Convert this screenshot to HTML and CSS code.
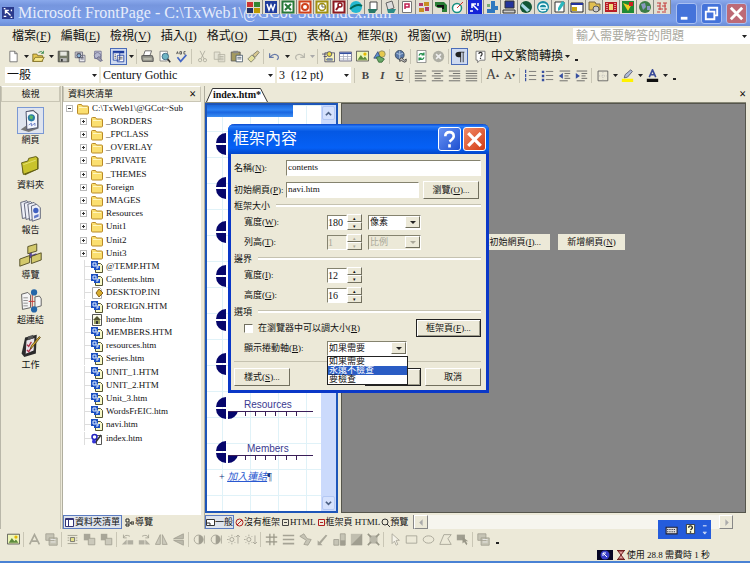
FILE: index.html
```
<!DOCTYPE html>
<html lang="zh-Hant">
<head>
    <meta charset="UTF-8">
    <meta name="viewport" content="width=device-width, initial-scale=1.0">
    <title>Microsoft FrontPage</title>
    <link rel="stylesheet" href="styles.css">
</head>
<body>
    <svg class="sprite" aria-hidden="true">
        <!-- standard toolbar -->
        <symbol id="new" viewBox="0 0 16 16"><path d="M3.5 1.5h6l3 3v10h-9z" fill="#fff" stroke="#666"/><path d="M9.500 1.500v3h3" fill="none" stroke="#666"/></symbol>
        <symbol id="open" viewBox="0 0 16 16"><path d="M1 5h5l1 2h6v7H1z" fill="#e8c850" stroke="#776820"/><path d="M4 9h11l-3 5H1z" fill="#f7e88a" stroke="#776820"/><path d="M8 3q4-3 6 1m0-3v3h-3" fill="none" stroke="#268040"/></symbol>
        <symbol id="save" viewBox="0 0 16 16"><path d="M1.500 1.500h13v13h-13z" fill="#777b68" stroke="#444"/><path d="M4 2h8v5H4z" fill="#e7e7e0"/><path d="M4 10h8v4H4z" fill="#bbb"/><path d="M5 11h2v3H5z" fill="#333"/></symbol>
        <symbol id="find" viewBox="0 0 16 16"><path d="M1.500 2.500h9v7h-9zM6.500 6.500h7v8h-7z" fill="#e9e9ef" stroke="#667"/><path d="M3 4h6M3 6h4M8 9h4M8 11h4" stroke="#556" /><circle cx="6" cy="7" r="2.500" fill="#8fb6d8" stroke="#334"/></symbol>
        <symbol id="publish" viewBox="0 0 16 16"><path d="M4.500 1.500h8v9h-8z" fill="#dde" stroke="#668"/><circle cx="8" cy="7" r="4" fill="#b5b8cf" stroke="#668"/><path d="M10 8l4 5-3 1-4-4z" fill="#99a" stroke="#668"/></symbol>
        <symbol id="pane" viewBox="0 0 16 16"><path d="M1 1h14v3H1z" fill="#1a3a9c"/><path d="M1.500 3.500h8v9h-8zM6.500 6.500h8v8h-8z" fill="#fff" stroke="#1a3a9c"/><path d="M3 6h2M3 8h2M3 10h2M8 9h5M8 11h5" stroke="#555"/></symbol>
        <symbol id="print" viewBox="0 0 16 16"><path d="M5 1h8l-2 6H3z" fill="#fff" stroke="#555"/><path d="M1 7h13l1 3v4H2l-1-3z" fill="#999a90" stroke="#444"/><path d="M3 11h10" stroke="#e2e2d2"/></symbol>
        <symbol id="preview" viewBox="0 0 16 16"><path d="M2.500 1.500h9v12h-9z" fill="#fff" stroke="#777"/><circle cx="9" cy="8" r="4" fill="#6eb4c4" stroke="#355c77"/><path d="M12 11l3 4" stroke="#333" stroke-width="2"/></symbol>
        <symbol id="spell" viewBox="0 0 16 16"><path d="M2 5l1-3 1 3M6 2v3h2V2zM13 2h-2v3h2" fill="none" stroke="#444"/><path d="M3 9l4 5 7-8" fill="none" stroke="#4466c4" stroke-width="2"/></symbol>
        <symbol id="cut" viewBox="0 0 16 16"><path d="M5 1l5 10M11 1L6 11" fill="none" stroke="#aaa99a"/><circle cx="5" cy="12.500" r="2" fill="none" stroke="#aaa99a"/><circle cx="11" cy="12.500" r="2" fill="none" stroke="#aaa99a"/></symbol>
        <symbol id="copy" viewBox="0 0 16 16"><path d="M1.500 2.500h7v9h-7zM6.500 5.500h8v9h-8z" fill="#e5e3d5" stroke="#b4b2a2"/><path d="M8 8h5M8 10h5M8 12h5" stroke="#b4b2a2"/></symbol>
        <symbol id="paste" viewBox="0 0 16 16"><path d="M1.500 2.500h11v11h-11z" fill="#a49a60" stroke="#555"/><path d="M4 1h6v3H4z" fill="#888"/><path d="M7.500 6.500h8v8h-8z" fill="#fff" stroke="#456"/><path d="M9 9h5M9 11h5" stroke="#456"/></symbol>
        <symbol id="brush" viewBox="0 0 16 16"><path d="M13 1l2 2-5 6-3-3z" fill="#d8c890" stroke="#776"/><path d="M6 6l4 4-5 5-4-4z" fill="#e4e19c" stroke="#776"/></symbol>
        <symbol id="undo" viewBox="0 0 16 16"><path d="M2 4v5h5M2 9q6-6 10-2 2 3-1 5" fill="none" stroke="#6578a8" stroke-width="1.500"/></symbol>
        <symbol id="redo" viewBox="0 0 16 16"><path d="M14 4v5H9M14 9Q8 3 4 7q-2 3 1 5" fill="none" stroke="#b9b8ad" stroke-width="1.500"/></symbol>
        <symbol id="component" viewBox="0 0 16 16"><path d="M3.500 3.500h12v11h-12z" fill="#f5f0b8" stroke="#446"/><path d="M0 5h5M2 8h4M5 12h8" stroke="#446"/><circle cx="9" cy="5" r="3" fill="#e8d940" stroke="#446"/><path d="M6 10h7v3H6z" fill="#78a"/></symbol>
        <symbol id="table" viewBox="0 0 16 16"><path d="M.5 2.500h15v11H.5z" fill="#fff" stroke="#557"/><path d="M1 3h14v2H1z" fill="#3450a0"/><path d="M1 8h14M1 11h14M5.500 5v8M10.500 5v8" stroke="#a9aebf"/></symbol>
        <symbol id="picture" viewBox="0 0 16 16"><path d="M.5 1.500h15v12H.5z" fill="#eef6b8" stroke="#444"/><path d="M2 12l4-6 3 4 2-2 3 4z" fill="#5c8a3c"/><circle cx="11" cy="5" r="2" fill="#e6b800"/></symbol>
        <symbol id="shapes" viewBox="0 0 16 16"><circle cx="11" cy="5" r="4" fill="#e6c94c" stroke="#886"/><path d="M1 10l5-8 3 8z" fill="#5b8fd0" stroke="#347"/><path d="M4 9l4-1 6 3-3 4H7z" fill="#68a867" stroke="#363"/></symbol>
        <symbol id="link" viewBox="0 0 16 16"><circle cx="7" cy="6" r="5.500" fill="#5978a8" stroke="#345"/><path d="M3 4q4 3 8 0M7 1v10" stroke="#bcd0e4" fill="none"/><path d="M7 11q2-3 4 0t4 0v3q-2 2-4 0t-4 0z" fill="#bbb" stroke="#333"/></symbol>
        <symbol id="refresh" viewBox="0 0 16 16"><path d="M2.500.5h11v15h-11z" fill="#fff" stroke="#777"/><path d="M5 7q1-4 6-2m0-2v3H8M11 9q-1 4-6 2m0 2v-3h3" fill="none" stroke="#289050" stroke-width="1.500"/></symbol>
        <symbol id="stop" viewBox="0 0 16 16"><circle cx="8" cy="8" r="7" fill="#aeaea4"/><path d="M5 5l6 6M11 5l-6 6" stroke="#eee" stroke-width="2"/></symbol>
        <symbol id="para" viewBox="0 0 16 16"><path d="M8 2h6v1h-1v12h-1V3h-2v12H9V9Q3 9 3 5.500T8 2z" fill="#222"/></symbol>
        <symbol id="help" viewBox="0 0 16 16"><path d="M2.500 1.500h11v11h-6l-3 3v-3h-2z" fill="#fff" stroke="#666"/><path d="M6 5q0-2 2-2t2 2q0 1-2 3m0 1.500v1.500" fill="none" stroke="#333" stroke-width="1.500"/></symbol>
        <!-- formatting toolbar -->
        <symbol id="left" viewBox="0 0 16 16"><path d="M1 2.500h14M1 5.500h9M1 8.500h14M1 11.500h9M1 14.500h14" stroke="#555"/></symbol>
        <symbol id="center" viewBox="0 0 16 16"><path d="M1 2.500h14M4 5.500h8M1 8.500h14M4 11.500h8M1 14.500h14" stroke="#555"/></symbol>
        <symbol id="right" viewBox="0 0 16 16"><path d="M1 2.500h14M6 5.500h9M1 8.500h14M6 11.500h9M1 14.500h14" stroke="#555"/></symbol>
        <symbol id="justify" viewBox="0 0 16 16"><path d="M1 2.500h14M1 5.500h14M1 8.500h14M1 11.500h14M1 14.500h14" stroke="#555"/></symbol>
        <symbol id="numbers" viewBox="0 0 16 16"><path d="M2 1v4M2 6v4M2 11v4" stroke="#3850a0" stroke-width="1.500"/><path d="M6 3h9M6 8h9M6 13h9" stroke="#666"/></symbol>
        <symbol id="bullets" viewBox="0 0 16 16"><path d="M1 2h3v3H1zM1 7h3v3H1zM1 12h3v3H1z" fill="#3850a0"/><path d="M6 3h9M6 8h9M6 13h9" stroke="#666"/></symbol>
        <symbol id="outdent" viewBox="0 0 16 16"><path d="M2 2.500h13M8 5.500h7M8 8.500h5M8 11.500h7M2 14.500h10" stroke="#555"/><path d="M6 5v7L1 8.500z" fill="#3850a0"/></symbol>
        <symbol id="indent" viewBox="0 0 16 16"><path d="M2 2.500h13M8 5.500h7M8 8.500h5M8 11.500h7M2 14.500h10" stroke="#555"/><path d="M1 5v7l5-3.500z" fill="#3850a0"/></symbol>
        <symbol id="border" viewBox="0 0 16 16"><path d="M2.500 2.500h12v12h-12z" fill="none" stroke="#555"/><path d="M8.500 4v10M4 8.500h10" stroke="#aaa" stroke-dasharray="1 2"/></symbol>
        <symbol id="marker" viewBox="0 0 16 16"><path d="M12 1l2 2-6 7-4 1 1-4z" fill="#b0bdd8" stroke="#556"/><path d="M1 12h14v4H1z" fill="#fff200"/></symbol>
        <symbol id="fontcolor" viewBox="0 0 16 16"><path d="M4 10l4-9 4 9M5.500 7h5" fill="none" stroke="#3a4b98" stroke-width="2"/><path d="M1 12h14v4H1z" fill="#111"/></symbol>
        <!-- folder list -->
        <symbol id="folder" viewBox="0 0 12 11"><path d="M.5 2q0-1 1-1h3l1 1.500h5q1 0 1 1v6q0 1-1 1h-9q-1 0-1-1z" fill="#fbdf70" stroke="#b98a28"/><path d="M2 4h8" stroke="#fff6c0"/></symbol>
        <symbol id="page" viewBox="0 0 12 12"><path d="M6.500 2.500h3l2 2v7h-7v-3z" fill="#f8f8c8" stroke="#555533"/><path d="M0 0h7v5h2v4H3V7H0z" fill="#1a4fc0"/><path d="M2 2h3v3H2zM5 5h2v2H5" fill="none" stroke="#dceaff"/></symbol>
        <symbol id="ini" viewBox="0 0 12 12"><path d="M1.500.5h7l2 2v9h-9z" fill="#fff" stroke="#aaa"/><path d="M8 2l4 4-4 4-3-4z" fill="#d8ae30" stroke="#86601a"/></symbol>
        <symbol id="home" viewBox="0 0 12 12"><path d="M1.500.5h9v11h-9z" fill="#fdfdea" stroke="#555"/><path d="M6 2l4 4H2z" fill="#555533"/><path d="M3 6h6v4H3z" fill="#99a060"/><path d="M5 7h2v3H5z" fill="#333"/></symbol>
        <symbol id="editing" viewBox="0 0 12 12"><path d="M5.500 2.500h5v9h-5z" fill="#fff" stroke="#555"/><circle cx="3.500" cy="4" r="2.500" fill="#fff" stroke="#2020c0" stroke-width="1.500"/><path d="M4 10l6-8" stroke="#333" stroke-width="1.500"/><circle cx="3" cy="8.500" r="2" fill="#3535d8"/></symbol>
        <!-- views bar -->
        <symbol id="v-page" viewBox="0 0 28 28"><path d="M3 24l6-4V4l8-2 6 5v16l-11 4z" fill="#777"/><path d="M9 4l8-1 5 4v15l-12 2z" fill="#f4f6fc" stroke="#444a66"/><circle cx="15" cy="11" r="4" fill="#2979a5"/><path d="M13 8l4 1-1 4-3-1z" fill="#58b868"/><path d="M12 19l3-2v3l4-3v3" stroke="#6478c4" fill="none"/></symbol>
        <symbol id="v-folder" viewBox="0 0 28 28"><path d="M5 12l7-2 1-3 8-3 2 2v12L8 25l-3-3z" fill="#686510"/><path d="M4 11l7-2 1-3 8-2 2 2v12L6 24z" fill="#c9c32c" stroke="#5a5714"/><path d="M6 13l14-5" stroke="#e8e478"/></symbol>
        <symbol id="v-report" viewBox="0 0 28 28"><g fill="#eef0f8" stroke="#555b70"><path d="M3 5l7-2 3 3v15l-8 2z"/><path d="M7 6l7-2 3 3v15l-8 2z"/><path d="M11 7l7-2 3 3v15l-8 2z"/><path d="M15 9l6-2 4 4v12l-9 3z"/></g><circle cx="20" cy="14" r="3" fill="#4060c0"/><path d="M18 20l5-2v3l-5 2z" fill="#6078c8"/></symbol>
        <symbol id="v-nav" viewBox="0 0 28 28"><path d="M14 8v8M7 18l14-5" stroke="#5b49a0" fill="none" stroke-width="3"/><g fill="#d3c96c" stroke="#4e4820"><path d="M11 4l10-3v8l-10 3z"/><path d="M2 18l11-4v8L2 26z"/><path d="M15 15l11-4v8l-11 4z"/></g></symbol>
        <symbol id="v-link" viewBox="0 0 28 28"><path d="M4 7l7-2 3 3v14l-9 2zM19 10l5-1 2 3v8l-7 2z" fill="#f4f4f4" stroke="#555"/><path d="M6 11h5M6 14h5M6 17h5M6 20h5" stroke="#888"/><path d="M12 15h7M16 6v19" stroke="#c03030"/><circle cx="18" cy="5" r="3.500" fill="#2466a8"/><circle cx="18" cy="24" r="3.500" fill="#2466a8"/></symbol>
        <symbol id="v-task" viewBox="0 0 28 28"><path d="M4 23l4-18 13-3-1 21-13 4z" fill="#2b2b2b"/><path d="M9 8l10-3-1 15-10 4z" fill="#e9e4e9" stroke="#222"/><path d="M11 4l6-2v4l-6 2z" fill="#555"/><path d="M10 13l2 2 3-5M10 19l2 2 3-5" stroke="#b03048" fill="none" stroke-width="1.500"/><path d="M25 5L16 16l-2 2 1-4 9-10z" fill="#e3b838" stroke="#5a4414"/></symbol>
        <!-- pictures toolbar -->
        <symbol id="d-text" viewBox="0 0 16 16"><path d="M2 14L8 2l6 12M5 10h7" fill="none" stroke="#aaa89a" stroke-width="2"/></symbol>
        <symbol id="d-thumb" viewBox="0 0 16 16"><path d="M1 1h10v8H1zM5 6h10v9H5z" fill="#c6c4b5" stroke="#a09e90"/><path d="M7 8h6M7 11h6" stroke="#eee"/></symbol>
        <symbol id="d-pos" viewBox="0 0 16 16"><path d="M2 3h12M2 6h2M12 6h2M2 9h2M12 9h2M2 13h12" stroke="#999788"/><path d="M5.500 5.500h5v5h-5z" fill="#e5e188" stroke="#666"/></symbol>
        <symbol id="d-front" viewBox="0 0 16 16"><path d="M1 1h8v8H1z" fill="#a8a698"/><path d="M6.500 6.500h8v8h-8z" fill="#cbc9bb" stroke="#a09e90"/></symbol>
        <symbol id="d-rotl" viewBox="0 0 16 16"><path d="M1 14l6-6v6zM8 14V9h7v5z" fill="#b1afa2"/><path d="M3 6q2-5 8-2M3 2v4h4" fill="none" stroke="#a09e90"/></symbol>
        <symbol id="d-rotr" viewBox="0 0 16 16"><path d="M15 14L9 8v6zM8 14V9H1v5z" fill="#b1afa2"/><path d="M13 6q-2-5-8-2M13 2v4H9" fill="none" stroke="#a09e90"/></symbol>
        <symbol id="d-fliph" viewBox="0 0 16 16"><path d="M6.500 2v12h-6zM9 2v12h6z" fill="#cbc9bb" stroke="#a09e90"/></symbol>
        <symbol id="d-flipv" viewBox="0 0 16 16"><path d="M14 1v6H2zM14 15V9H2z" fill="#bbb9ab" stroke="#a09e90"/></symbol>
        <symbol id="d-contrast" viewBox="0 0 16 16"><circle cx="7" cy="8" r="5.500" fill="none" stroke="#a09e90"/><path d="M7 2.500a5.500 5.500 0 0 1 0 11z" fill="#a09e90"/><path d="M14 3v10" stroke="#a09e90"/></symbol>
        <symbol id="d-bright" viewBox="0 0 16 16"><circle cx="6" cy="8" r="2.500" fill="none" stroke="#a09e90"/><path d="M6 2v2M6 12v2M0 8h2M2 4l1 1M10 4L9 5M2 12l1-1M10 12l-1-1M13.500 3v10M11 5l2.500-2.500L16 5" fill="none" stroke="#a09e90"/></symbol>
        <symbol id="d-dim" viewBox="0 0 16 16"><circle cx="6" cy="8" r="2.500" fill="none" stroke="#a09e90"/><path d="M6 2v2M6 12v2M0 8h2M2 4l1 1M10 4L9 5M2 12l1-1M10 12l-1-1M13.500 3v10M11 11l2.500 2.500L16 11" fill="none" stroke="#a09e90"/></symbol>
        <symbol id="d-crop" viewBox="0 0 16 16"><path d="M6 1v14M11 1v14M1 5h14M1 11h14" fill="none" stroke="#999788" stroke-width="1.500"/></symbol>
        <symbol id="d-line" viewBox="0 0 16 16"><path d="M1 3h14M1 8h14M1 13h14" stroke="#a5a395" stroke-width="2"/></symbol>
        <symbol id="d-wand" viewBox="0 0 16 16"><path d="M1 4l5-3 4 6 5 1-4 7-5-1 3-5z" fill="#c6c4b5" stroke="#a09e90"/></symbol>
        <symbol id="d-pen" viewBox="0 0 16 16"><path d="M2 9v6h6l-2-2 8-10-2-1-8 9z" fill="#aaa89a"/></symbol>
        <symbol id="d-bars" viewBox="0 0 16 16"><path d="M1 8h6v7H1zM9 1h6v14H9z" fill="#c6c4b5" stroke="#a09e90"/><path d="M9 9h6v6H9z" fill="#a09e90"/></symbol>
        <symbol id="d-bevel" viewBox="0 0 16 16"><path d="M1 1h14v14H1z" fill="#c0beaf"/><path d="M15 1v14H1z" fill="#a09e90"/></symbol>
        <symbol id="d-sample" viewBox="0 0 16 16"><path d="M3 3h10v10H3z" fill="#b9b7a9"/><path d="M1 1l4 4M15 1l-4 4M1 15l4-4M15 15l-4-4" stroke="#999788" stroke-width="2"/></symbol>
        <symbol id="d-arrow" viewBox="0 0 16 16"><path d="M5 1v12l3-3 2 5 2-1-2-5h4z" fill="#f5f3e9" stroke="#a5a395"/></symbol>
        <symbol id="d-rect" viewBox="0 0 16 16"><path d="M1.500 3.500h13v9h-13z" fill="none" stroke="#a09e90"/></symbol>
        <symbol id="d-oval" viewBox="0 0 16 16"><ellipse cx="8" cy="8" rx="6.500" ry="4.500" fill="none" stroke="#a09e90"/></symbol>
        <symbol id="d-poly" viewBox="0 0 16 16"><path d="M6 2h9l-4 5 4 7H1z" fill="none" stroke="#a09e90"/></symbol>
        <symbol id="d-hot" viewBox="0 0 16 16"><path d="M1 2h10v7H1z" fill="#a09e90"/><path d="M8 5v8l2-2 3 4 1-2-2-3h3z" fill="#999788"/></symbol>
        <!-- small parts -->
        <symbol id="bullet" viewBox="0 0 98 24"><path d="M10 0v10H0A10 10 0 0 1 10 0zM0 12h10v10A10 10 0 0 1 0 12zM12 14h10a10 10 0 0 1-10 8z" fill="#06066c"/><path d="M12 14.500h85M29.500 15v4M39.500 15v4M49.500 15v4M59.500 15v4M70.500 15v4M80.500 15v4" stroke="#3a1e58"/></symbol>
        <symbol id="frontpage" viewBox="0 0 14 14"><path d="M0 0h14v14H0z" fill="#2a3a8c"/><path d="M4 4l6 6M4 8V4h4M2 2h2M10 12h2M11 3v2M2 11h3" fill="none" stroke="#fff" stroke-width="1.500"/></symbol>
    </svg>

    <header class="title-bar">
        <svg class="app-icon"><use href="#frontpage"/></svg>
        <h1>Microsoft FrontPage - C:\TxWeb1\@GCot-Sub\index.htm</h1>
        <div class="window-buttons">
            <button aria-label="Minimize"><svg viewBox="0 0 20 20"><path d="M4 15h7" stroke="#fff" stroke-width="3"/></svg></button>
            <button aria-label="Restore"><svg viewBox="0 0 20 20"><path d="M7 7V4h9v8h-3M4 8h9v8H4z" fill="none" stroke="#fff" stroke-width="2"/></svg></button>
            <button class="close" aria-label="Close"><svg viewBox="0 0 20 20"><path d="M4 4l12 12M16 4L4 16" stroke="#fff" stroke-width="3"/></svg></button>
        </div>
        <!-- office shortcut bar floats over the title -->
        <div class="shortcut-bar">
            <svg viewBox="0 0 16 14"><path d="M1 2h6v5H1z" fill="#c33"/><path d="M8 2h6v5H8z" fill="#383"/><path d="M1 8h6v5H1z" fill="#236"/><path d="M8 8h6v5H8z" fill="#b90"/></svg>
            <svg viewBox="0 0 16 14"><path d="M2 1h12v12H2z" fill="#203c9c"/><path d="M4 4l2 6 2-5 2 5 2-6" fill="none" stroke="#fff" stroke-width="1.500"/></svg>
            <svg viewBox="0 0 16 14"><path d="M2.500 1.500h11v11h-11z" fill="#fff" stroke="#287838" stroke-width="2"/><path d="M5 4l6 6M11 4l-6 6" stroke="#287838" stroke-width="2"/></svg>
            <svg viewBox="0 0 16 14"><path d="M2.500 1.500h11v11h-11z" fill="#fff" stroke="#cf421c" stroke-width="2"/><circle cx="8" cy="7" r="3" fill="none" stroke="#cf421c" stroke-width="2"/></svg>
            <svg viewBox="0 0 16 14"><path d="M2.500 1.500h11v11h-11z" fill="#fff" stroke="#a09010" stroke-width="2"/><circle cx="8" cy="7" r="3.500" fill="none" stroke="#a09010" stroke-width="1.500"/><path d="M8 4v3h3" fill="none" stroke="#665"/></svg>
            <svg viewBox="0 0 16 14"><path d="M2.500 1.500h11v11h-11z" fill="#fff" stroke="#8c1820" stroke-width="2"/><path d="M5 10l3-4" stroke="#8c1820" stroke-width="2"/><circle cx="9" cy="5" r="2" fill="#fff" stroke="#8c1820" stroke-width="1.500"/></svg>
            <svg viewBox="0 0 16 14"><circle cx="8" cy="7" r="6" fill="#25b8d0"/><path d="M2 9q7-6 12-3" fill="none" stroke="#065" stroke-width="2"/></svg>
            <svg viewBox="0 0 16 14"><path d="M5 2h7v8H5z" fill="#fff" stroke="#444"/><path d="M3 9h9l-2 4H4z" fill="#287868"/></svg>
            <svg viewBox="0 0 16 14"><path d="M4 3l6-2 2 7-6 2z" fill="#ddd" stroke="#666"/><path d="M5 9h9l-2 4H6z" fill="#2c8c88"/></svg>
            <svg viewBox="0 0 16 14"><path d="M3.500 1.500h9v11h-9z" fill="#fff" stroke="#777"/><path d="M6 9V4h4v3H6" fill="none" stroke="#c02050" stroke-width="1.500"/></svg>
            <svg viewBox="0 0 16 14"><path d="M2 3h12v9H2z" fill="#ddd"/><path d="M3 3h4v3H3zM9 7h4v4H9z" fill="#b23a66"/><path d="M8 2h5v4H8zM3 8h5v4H3z" fill="#c88f22"/></svg>
            <svg viewBox="0 0 16 14"><path d="M2 2h9l3 3v7H9V8H5L2 6z" fill="#2a7d36"/><path d="M4 6h6v3" fill="none" stroke="#111" stroke-width="2"/></svg>
            <svg viewBox="0 0 16 14"><circle cx="7" cy="8" r="4.500" fill="#fff" stroke="#199080" stroke-width="1.500"/><path d="M7 8l6-6" stroke="#c33"/></svg>
            <svg viewBox="0 0 16 14"><path d="M1 0h14v14H1z" fill="#1424d8"/><path d="M5 4l6 6M5 8V4h4M3 11h3M11 3v3" fill="none" stroke="#fff" stroke-width="1.500"/></svg>
            <svg viewBox="0 0 16 14"><path d="M7 1h4v5h3v4h-3v3H3V9h4z" fill="#2f78c0"/><path d="M3 4h3v3H3z" fill="#7a7"/></svg>
            <svg viewBox="0 0 16 14"><path d="M4 1h9v7H4z" fill="#24349c" stroke="#333"/><path d="M2 10h12v3H2z" fill="#ccc" stroke="#333"/></svg>
            <svg viewBox="0 0 16 14"><circle cx="8" cy="7" r="6" fill="#153"/><path d="M4 3l8 7-3 2-6-6z" fill="#a8d8e4"/></svg>
            <svg viewBox="0 0 16 14"><circle cx="8" cy="7" r="6" fill="#1889a0"/><path d="M4 8h8q0-4-4-4T4 8q1 4 7 2" fill="none" stroke="#eff" stroke-width="1.500"/></svg>
            <svg viewBox="0 0 16 14"><path d="M3 2h9v10H3z" fill="#fff" stroke="#333"/><path d="M10 1l3 2-5 7-2 1v-3z" fill="#29b7bd"/></svg>
            <svg viewBox="0 0 16 14"><path d="M2 3h12v9H2z" fill="#fff" stroke="#222"/><path d="M2 3h12v2H2z" fill="#24349c"/><path d="M3 7h5v4H3z" fill="#c9a810"/></svg>
            <svg viewBox="0 0 16 14"><path d="M3 2h6l1 2h4v6H3z" fill="#e0bf50" stroke="#764"/><circle cx="10" cy="9" r="3" fill="#ccc" stroke="#555"/></svg>
            <svg viewBox="0 0 16 14"><path d="M2 2h12v10H2z" fill="#b81c24"/><path d="M6 4h4v6H6z" fill="#f1da7a"/><path d="M4 3v8M12 3v8" stroke="#fff" stroke-dasharray="1 1"/></svg>
            <svg viewBox="0 0 16 14"><path d="M2 1h12v12H2z" fill="#208a34"/><path d="M3 3l5 8 5-9-5 3z" fill="#f1cf20"/><path d="M9 2h4v4H9z" fill="#c22"/></svg>
            <svg viewBox="0 0 16 14"><circle cx="8" cy="7" r="6" fill="#3b7c46"/><path d="M4 4l4-1 1 4-3 3zM10 6h3v4h-3z" fill="#8898c0"/></svg>
            <svg viewBox="0 0 16 14"><path d="M3 3h4M9 3h4M3 6h3M8 6h4M4 9h5M11 9h2M3 12h3M8 12h4M6 3v7M11 3v8" fill="none" stroke="#c43c3c"/></svg>
        </div>
    </header>

    <nav class="menu-bar">
        <button>檔案(<u>F</u>)</button>
        <button>編輯(<u>E</u>)</button>
        <button>檢視(<u>V</u>)</button>
        <button>插入(<u>I</u>)</button>
        <button>格式(<u>O</u>)</button>
        <button>工具(<u>T</u>)</button>
        <button>表格(<u>A</u>)</button>
        <button>框架(<u>R</u>)</button>
        <button>視窗(<u>W</u>)</button>
        <button>說明(<u>H</u>)</button>
        <div class="ask"><input type="text" aria-label="Ask" placeholder="輸入需要解答的問題"><i class="arrow"></i></div>
    </nav>

    <div class="toolbar">
        <button class="tool"><svg><use href="#new"/></svg></button><i class="arrow"></i>
        <button class="tool"><svg><use href="#open"/></svg></button><i class="arrow"></i>
        <button class="tool"><svg><use href="#save"/></svg></button>
        <button class="tool"><svg><use href="#find"/></svg></button>
        <button class="tool"><svg><use href="#publish"/></svg></button>
        <i class="sep blank"></i>
        <button class="tool pressed"><svg><use href="#pane"/></svg></button><i class="arrow"></i>
        <i class="sep"></i>
        <button class="tool"><svg><use href="#print"/></svg></button>
        <button class="tool"><svg><use href="#preview"/></svg></button>
        <button class="tool"><svg><use href="#spell"/></svg></button>
        <i class="sep"></i>
        <button class="tool"><svg><use href="#cut"/></svg></button>
        <button class="tool"><svg><use href="#copy"/></svg></button>
        <button class="tool"><svg><use href="#paste"/></svg></button>
        <button class="tool"><svg><use href="#brush"/></svg></button>
        <i class="sep"></i>
        <button class="tool"><svg><use href="#undo"/></svg></button><i class="arrow"></i>
        <button class="tool"><svg><use href="#redo"/></svg></button><i class="arrow dim"></i>
        <i class="sep"></i>
        <button class="tool"><svg><use href="#component"/></svg></button>
        <button class="tool"><svg><use href="#table"/></svg></button>
        <button class="tool"><svg><use href="#picture"/></svg></button>
        <button class="tool"><svg><use href="#shapes"/></svg></button>
        <i class="sep"></i>
        <button class="tool"><svg><use href="#link"/></svg></button>
        <i class="sep"></i>
        <button class="tool"><svg><use href="#refresh"/></svg></button>
        <button class="tool"><svg><use href="#stop"/></svg></button>
        <i class="sep"></i>
        <button class="tool pressed"><svg><use href="#para"/></svg></button>
        <i class="sep blank"></i>
        <button class="tool"><svg><use href="#help"/></svg></button>
        <button class="convert">中文繁簡轉換</button><i class="arrow"></i><i class="more"></i>
    </div>

    <div class="toolbar format-bar">
        <div class="combo style-combo"><select aria-label="Style"><option>一般</option></select><i class="arrow"></i></div>
        <div class="combo font-combo"><select aria-label="Font"><option>Century Gothic</option></select><i class="arrow"></i></div>
        <div class="combo size-combo"><select aria-label="Size"><option>3&nbsp; (12 pt)</option></select><i class="arrow"></i></div>
        <i class="sep"></i>
        <button class="tool"><b>B</b></button>
        <button class="tool"><b><em>I</em></b></button>
        <button class="tool"><b><u>U</u></b></button>
        <i class="sep"></i>
        <button class="tool"><svg><use href="#left"/></svg></button>
        <button class="tool"><svg><use href="#center"/></svg></button>
        <button class="tool"><svg><use href="#right"/></svg></button>
        <button class="tool"><svg><use href="#justify"/></svg></button>
        <i class="sep"></i>
        <button class="tool grow">A<sup>▴</sup></button>
        <button class="tool shrink">A<sup>▾</sup></button>
        <i class="sep"></i>
        <button class="tool"><svg><use href="#numbers"/></svg></button>
        <button class="tool"><svg><use href="#bullets"/></svg></button>
        <button class="tool"><svg><use href="#outdent"/></svg></button>
        <button class="tool"><svg><use href="#indent"/></svg></button>
        <i class="sep"></i>
        <button class="tool"><svg><use href="#border"/></svg></button><i class="arrow"></i>
        <button class="tool"><svg><use href="#marker"/></svg></button><i class="arrow"></i>
        <button class="tool"><svg><use href="#fontcolor"/></svg></button><i class="arrow"></i><i class="more"></i>
    </div>

    <main>
        <aside class="views">
            <h2>檢視</h2>
            <button class="active"><svg><use href="#v-page"/></svg>網頁</button>
            <button><svg><use href="#v-folder"/></svg>資料夾</button>
            <button><svg><use href="#v-report"/></svg>報告</button>
            <button><svg><use href="#v-nav"/></svg>導覽</button>
            <button><svg><use href="#v-link"/></svg>超連結</button>
            <button><svg><use href="#v-task"/></svg>工作</button>
        </aside>

        <section class="folders">
            <h2>資料夾清單 <button class="x" aria-label="Close">×</button></h2>
            <ul class="tree">
                <li class="root"><i class="toggle minus"></i><svg><use href="#folder"/></svg>C:\TxWeb1\@GCot~Sub</li>
                <li><i class="toggle"></i><svg><use href="#folder"/></svg>_BORDERS</li>
                <li><i class="toggle"></i><svg><use href="#folder"/></svg>_FPCLASS</li>
                <li><i class="toggle"></i><svg><use href="#folder"/></svg>_OVERLAY</li>
                <li><i class="toggle"></i><svg><use href="#folder"/></svg>_PRIVATE</li>
                <li><i class="toggle"></i><svg><use href="#folder"/></svg>_THEMES</li>
                <li><i class="toggle"></i><svg><use href="#folder"/></svg>Foreign</li>
                <li><i class="toggle"></i><svg><use href="#folder"/></svg>IMAGES</li>
                <li><i class="toggle"></i><svg><use href="#folder"/></svg>Resources</li>
                <li><i class="toggle"></i><svg><use href="#folder"/></svg>Unit1</li>
                <li><i class="toggle"></i><svg><use href="#folder"/></svg>Unit2</li>
                <li><i class="toggle"></i><svg><use href="#folder"/></svg>Unit3</li>
                <li><i class="line"></i><svg><use href="#page"/></svg>@TEMP.HTM</li>
                <li><i class="line"></i><svg><use href="#page"/></svg>Contents.htm</li>
                <li><i class="line"></i><svg><use href="#ini"/></svg>DESKTOP.INI</li>
                <li><i class="line"></i><svg><use href="#page"/></svg>FOREIGN.HTM</li>
                <li><i class="line"></i><svg><use href="#home"/></svg>home.htm</li>
                <li><i class="line"></i><svg><use href="#page"/></svg>MEMBERS.HTM</li>
                <li><i class="line"></i><svg><use href="#page"/></svg>resources.htm</li>
                <li><i class="line"></i><svg><use href="#page"/></svg>Series.htm</li>
                <li><i class="line"></i><svg><use href="#page"/></svg>UNIT_1.HTM</li>
                <li><i class="line"></i><svg><use href="#page"/></svg>UNIT_2.HTM</li>
                <li><i class="line"></i><svg><use href="#page"/></svg>Unit_3.htm</li>
                <li><i class="line"></i><svg><use href="#page"/></svg>WordsFrEIC.htm</li>
                <li><i class="line"></i><svg><use href="#page"/></svg>navi.htm</li>
                <li><i class="line"></i><svg><use href="#editing"/></svg>index.htm</li>
            </ul>
            <div class="tabs">
                <button class="active"><svg viewBox="0 0 9 9"><path d="M.5.5h8v8h-8z" fill="#fff" stroke="#337"/><path d="M.5 1.500h8M3.500 2v6" stroke="#337"/></svg>資料夾清單</button>
                <button><svg viewBox="0 0 9 9"><path d="M1 1h3v3H1zM1 6h3v2H1zM6 4h3v2H6zM4 5h2" fill="#ffd" stroke="#222"/></svg>導覽</button>
            </div>
        </section>

        <section class="editor">
            <div class="page-tabs">
                <button class="page-tab"><svg viewBox="0 0 62 14"><path d="M.5 14L6.500.5h48l7 13.500" fill="#fff" stroke="#333"/></svg><span>index.htm*</span></button>
                <button class="x" aria-label="Close">×</button>
            </div>
            <div class="frames">
                <div class="nav-frame">
                    <div class="nav-page">
                        <div class="banner"></div>
                        <ul>
                            <li><svg><use href="#bullet"/></svg></li>
                            <li><svg><use href="#bullet"/></svg></li>
                            <li><svg><use href="#bullet"/></svg></li>
                            <li><svg><use href="#bullet"/></svg></li>
                            <li><svg><use href="#bullet"/></svg></li>
                            <li><svg><use href="#bullet"/></svg></li>
                            <li><svg><use href="#bullet"/></svg><span>Resources</span></li>
                            <li><svg><use href="#bullet"/></svg><span>Members</span></li>
                        </ul>
                        <p class="add-link">+ <a href="#">加入連結</a>¶</p>
                    </div>
                    <div class="scrollbar">
                        <button aria-label="Up"><svg viewBox="0 0 8 8"><path d="M1 6l3-3 3 3" fill="none" stroke="#4d6185" stroke-width="2"/></svg></button>
                        <button aria-label="Down"><svg viewBox="0 0 8 8"><path d="M1 2l3 3 3-3" fill="none" stroke="#4d6185" stroke-width="2"/></svg></button>
                    </div>
                </div>
                <div class="empty-frame">
                    <button>設定初始網頁(<u>I</u>)...</button>
                    <button>新增網頁(<u>N</u>)</button>
                </div>
            </div>
            <div class="tabs editor-tabs">
                <button class="active"><svg viewBox="0 0 9 9"><path d="M.5 1.500h8v6h-8z" fill="#fff" stroke="#333"/><path d="M1 5h3v3" fill="none" stroke="#333"/></svg>一般</button>
                <button><svg viewBox="0 0 9 9"><circle cx="4.500" cy="4.500" r="3.500" fill="none" stroke="#b02020"/><path d="M2 7l5-5" stroke="#b02020"/></svg>沒有框架</button>
                <button><svg viewBox="0 0 9 9"><path d="M1.500 1.500h6v6h-6z" fill="none" stroke="#444"/><path d="M3 4.500h3" stroke="#444"/></svg>HTML</button>
                <button><svg viewBox="0 0 9 9"><path d="M1.500 1.500h6v6h-6z" fill="none" stroke="#b02020"/><path d="M3 4.500h3" stroke="#b02020"/></svg>框架頁 HTML</button>
                <button><svg viewBox="0 0 9 9"><circle cx="4" cy="4" r="3" fill="none" stroke="#333"/><path d="M6 6l3 3" stroke="#333"/></svg>預覽</button>
                <div class="hscroll">
                    <button aria-label="Left"><svg viewBox="0 0 8 8"><path d="M5 1v6L2 4z" fill="#aaa"/></svg></button>
                    <button aria-label="Right"><svg viewBox="0 0 8 8"><path d="M3 1v6l3-3z" fill="#aaa"/></svg></button>
                </div>
            </div>
        </section>
    </main>

    <div class="toolbar">
        <button class="tool"><svg><use href="#picture"/></svg></button>
        <i class="sep"></i>
        <button class="tool"><svg><use href="#d-text"/></svg></button>
        <button class="tool"><svg><use href="#d-thumb"/></svg></button>
        <i class="sep"></i>
        <button class="tool"><svg><use href="#d-pos"/></svg></button>
        <button class="tool"><svg><use href="#d-front"/></svg></button>
        <button class="tool"><svg><use href="#d-front"/></svg></button>
        <i class="sep"></i>
        <button class="tool"><svg><use href="#d-rotl"/></svg></button>
        <button class="tool"><svg><use href="#d-rotr"/></svg></button>
        <button class="tool"><svg><use href="#d-fliph"/></svg></button>
        <button class="tool"><svg><use href="#d-flipv"/></svg></button>
        <i class="sep"></i>
        <button class="tool"><svg><use href="#d-contrast"/></svg></button>
        <button class="tool"><svg><use href="#d-contrast"/></svg></button>
        <button class="tool"><svg><use href="#d-bright"/></svg></button>
        <button class="tool"><svg><use href="#d-dim"/></svg></button>
        <i class="sep"></i>
        <button class="tool"><svg><use href="#d-crop"/></svg></button>
        <button class="tool"><svg><use href="#d-line"/></svg></button>
        <button class="tool"><svg><use href="#d-wand"/></svg></button>
        <button class="tool"><svg><use href="#d-pen"/></svg></button>
        <button class="tool"><svg><use href="#d-bars"/></svg></button>
        <button class="tool"><svg><use href="#d-bevel"/></svg></button>
        <button class="tool"><svg><use href="#d-sample"/></svg></button>
        <i class="sep"></i>
        <button class="tool"><svg><use href="#d-arrow"/></svg></button>
        <button class="tool"><svg><use href="#d-rect"/></svg></button>
        <button class="tool"><svg><use href="#d-oval"/></svg></button>
        <button class="tool"><svg><use href="#d-poly"/></svg></button>
        <button class="tool"><svg><use href="#d-hot"/></svg></button>
        <i class="sep"></i>
        <button class="tool"><svg><use href="#d-thumb"/></svg></button><i class="more"></i>
    </div>

    <footer>
        <svg class="globe" viewBox="0 0 16 10"><path d="M0 0h16v10H0z" fill="#060624"/><circle cx="8" cy="5" r="4.500" fill="#3a3fc8"/><path d="M6 3l4 4M6 6V3h3" fill="none" stroke="#fff"/></svg>
        <svg class="glass" viewBox="0 0 8 10"><path d="M0 .5h8M0 9.500h8M1 1l6 8H1l6-8z" fill="#e8a0a0" stroke="#702020"/></svg>
        <span>使用 28.8 需費時 1 秒</span>
    </footer>

    <div class="language-bar">
        <svg viewBox="0 0 12 10"><path d="M1 3h10v6H1z" fill="#ddd" stroke="#223"/><path d="M2 5h8M2 7h8" stroke="#223" stroke-dasharray="1 1"/></svg>
        <svg viewBox="0 0 12 12"><path d="M1.500.5h9v10h-9z" fill="#ffffd8" stroke="#333"/><path d="M4 4q0-2 2-2t2 2q0 1-2 2.500M6 8v1.500" fill="none" stroke="#222" stroke-width="1.500"/></svg>
        <svg viewBox="0 0 6 12"><path d="M1 2h4M1 9h4M2 10.500h2" stroke="#fff"/></svg>
    </div>

    <form class="dialog">
        <div class="dialog-title">
            <h2>框架內容</h2>
            <button type="button" aria-label="Help"><svg viewBox="0 0 20 20"><path d="M6 7q0-4 4-4t4 4q0 2-4 5m0 2.500v3" fill="none" stroke="#fff" stroke-width="2.500"/></svg></button>
            <button type="button" class="close" aria-label="Close"><svg viewBox="0 0 20 20"><path d="M4 4l12 12M16 4L4 16" stroke="#fff" stroke-width="3"/></svg></button>
        </div>
        <div class="dialog-body">
            <div class="field first">
                <label for="name">名稱(<u>N</u>):</label>
                <input type="text" id="name" value="contents">
            </div>
            <div class="field second">
                <label for="start">初始網頁(<u>P</u>):</label>
                <input type="text" id="start" value="navi.htm">
                <button type="button" class="btn">瀏覽(<u>O</u>)...</button>
            </div>

            <h3>框架大小</h3>
            <div class="row">
                <label for="width">寬度(<u>W</u>):</label>
                <input type="text" id="width" value="180">
                <span class="spin"><button type="button">▴</button><button type="button">▾</button></span>
                <div class="combo unit"><select aria-label="Width unit"><option>像素</option></select><i class="drop"></i></div>
            </div>
            <div class="row">
                <label for="height">列高(<u>T</u>):</label>
                <input type="text" id="height" value="1" disabled>
                <span class="spin off"><button type="button" disabled>▴</button><button type="button" disabled>▾</button></span>
                <div class="combo unit off"><select aria-label="Height unit" disabled><option>比例</option></select><i class="drop"></i></div>
            </div>

            <h3>邊界</h3>
            <div class="row">
                <label for="marginWidth">寬度(<u>I</u>):</label>
                <input type="text" id="marginWidth" value="12">
                <span class="spin"><button type="button">▴</button><button type="button">▾</button></span>
            </div>
            <div class="row">
                <label for="marginHeight">高度(<u>G</u>):</label>
                <input type="text" id="marginHeight" value="16">
                <span class="spin"><button type="button">▴</button><button type="button">▾</button></span>
            </div>

            <h3>選項</h3>
            <div class="row">
                <input type="checkbox" id="resizable">
                <label class="wide" for="resizable">在瀏覽器中可以調大小(<u>R</u>)</label>
                <button type="button" class="btn default frame-page">框架頁(<u>F</u>)...</button>
            </div>
            <div class="row">
                <label for="scroll">顯示捲動軸(<u>B</u>):</label>
                <div class="combo scroll-combo">
                    <select id="scroll"><option>如果需要</option></select><i class="drop"></i>
                    <ul class="options">
                        <li>如果需要</li>
                        <li class="selected">永遠不檢查</li>
                        <li>要檢查</li>
                    </ul>
                </div>
            </div>

            <div class="actions">
                <button type="button" class="btn">樣式(<u>S</u>)...</button>
                <button type="button" class="btn default ok" aria-label="OK"></button>
                <button type="button" class="btn">取消</button>
            </div>
        </div>
    </form>
</body>
</html>
```
FILE: styles.css
```
* {
    box-sizing: border-box;
}

body {
    margin: 0;
    min-height: 100vh;
    display: flex;
    flex-direction: column;
    position: relative;
    overflow: hidden;
    background-color: #ece9d8;
    border-bottom: 2px solid #4a82d4;
    font-family: "Liberation Serif", "Noto Sans CJK TC", serif;
    font-size: 9px;
    line-height: 12px;
    color: #111;
}

h1, h2, h3, p, ul {
    margin: 0;
    padding: 0;
    font-weight: normal;
    list-style: none;
}

button, input, select {
    font: inherit;
    color: inherit;
    margin: 0;
    padding: 0;
    border: 0;
    border-radius: 0;
    background: none;
    white-space: nowrap;
}

select {
    appearance: none;
    width: 100%;
}

svg {
    display: block;
    flex: none;
}

.sprite {
    position: absolute;
    width: 0;
    height: 0;
}

/* title bar */
.title-bar {
    position: relative;
    display: flex;
    align-items: center;
    height: 26px;
    padding: 0 3px 0 2px;
    background: linear-gradient(#8aa9ec, #7696de 20%, #7b9fe8 80%, #6a8cd6);
}

.title-bar h1 {
    flex: 1;
    font-size: 16px;
    line-height: 26px;
    color: #e6ecfb;
    white-space: nowrap;
}

.app-icon {
    width: 12px;
    height: 12px;
    margin-right: 4px;
}

.window-buttons {
    display: flex;
    gap: 4px;
}

.window-buttons button {
    width: 21px;
    height: 21px;
    border: 1px solid #a9c0f2;
    border-radius: 3px;
    background: #4473da;
}

.window-buttons .close {
    background: #bd6a76;
}

.shortcut-bar {
    position: absolute;
    top: 0;
    left: 246px;
    display: flex;
    background: #d8d5c8;
}

.shortcut-bar svg {
    width: 17px;
    height: 14px;
    border-right: 1px solid #8a8a84;
    background: #e2dfd2;
}

/* menus and toolbars */
.menu-bar {
    display: flex;
    align-items: center;
    gap: 10px;
    height: 20px;
    padding-left: 12px;
    font-size: 12px;
}

.ask {
    flex: 1;
    display: flex;
    align-items: center;
    max-width: 177px;
    height: 16px;
    margin-left: auto;
    padding: 0 2px 0 3px;
    background: #fff;
}

.ask input {
    flex: 1;
    min-width: 0;
    outline: none;
}

.ask input::placeholder {
    color: #aaa9a0;
}

.toolbar {
    display: flex;
    align-items: center;
    height: 20px;
    padding-left: 5px;
}

.tool {
    display: flex;
    align-items: center;
    justify-content: center;
    flex: none;
    width: 17px;
    height: 17px;
    font-size: 11px;
    color: #444;
}

.tool svg {
    width: 13px;
    height: 13px;
}

.tool.pressed {
    border: 1px solid #4a6cb8;
    background: #cfdaef;
}

.arrow {
    flex: none;
    width: 8px;
    height: 8px;
    background: #222;
    clip-path: polygon(25% 38%, 88% 38%, 56% 75%);
}

.arrow.dim {
    background: #aaa;
}

.sep {
    flex: none;
    width: 1px;
    height: 15px;
    margin: 0 2px 0 1px;
    background: #c9c6b5;
}

.sep.blank {
    background: none;
}

.more {
    width: 3px;
    height: 2px;
    margin: 8px 0 0 4px;
    background: #222;
}

.convert {
    margin-left: 2px;
    font-size: 12px;
}

.combo {
    display: flex;
    align-items: center;
    background: #fff;
}

.format-bar {
    height: 18px;
    margin-bottom: 2px;
    font-size: 12px;
}

.format-bar .combo {
    height: 16px;
    padding-left: 2px;
    margin-right: 2px;
}

.format-bar .combo .arrow {
    margin-right: 1px;
}

.style-combo {
    width: 94px;
}

.font-combo {
    width: 174px;
}

.size-combo {
    width: 74px;
}

.grow {
    font-size: 14px;
}

.tool sup {
    font-size: 6px;
}

/* main area */
main {
    flex: 1;
    display: flex;
    min-height: 0;
}

main h2 {
    display: flex;
    align-items: center;
    height: 16px;
    border: 1px solid #c9c6b5;
    border-top-color: #fff;
    font-size: 9px;
}

.x {
    margin-left: auto;
    font-size: 12px;
    font-weight: bold;
    line-height: 12px;
}

.views {
    display: flex;
    flex-direction: column;
    align-items: center;
    width: 61px;
    border-left: 1px solid #b9b7a9;
    border-right: 1px solid #c9c6b5;
}

.views h2 {
    width: 100%;
    justify-content: center;
    margin-bottom: 5px;
}

.views button {
    display: flex;
    flex-direction: column;
    align-items: center;
    margin-bottom: 6px;
}

.views svg {
    width: 27px;
    height: 27px;
    border: 1px solid transparent;
}

.views .active svg {
    border-color: #7a98d4;
    background: #dfe4ee;
}

.folders {
    display: flex;
    flex-direction: column;
    width: 139px;
    margin-left: 1px;
    border-left: 1px solid #b0ae9f;
}

.folders h2 {
    padding: 0 4px;
}

.tree {
    flex: 1;
    background: #fff;
}

.tree li {
    display: flex;
    align-items: center;
    height: 13px;
    padding-left: 17px;
    line-height: 13px;
    white-space: nowrap;
}

.tree li:nth-child(5n) {
    margin-bottom: 1px;
}

.tree .root {
    padding-left: 3px;
}

.tree svg {
    width: 12px;
    height: 12px;
    margin-right: 3px;
}

.toggle {
    width: 7px;
    height: 7px;
    margin-right: 4px;
    border: 1px solid #bbb;
    background: linear-gradient(#333, #333) center / 3px 1px no-repeat, linear-gradient(#333, #333) center / 1px 3px no-repeat;
}

.toggle.minus {
    background: linear-gradient(#333, #333) center / 3px 1px no-repeat;
}

.line {
    width: 7px;
    height: 13px;
    margin: 0 0 0 4px;
    border-left: 1px solid #ddd;
    background: linear-gradient(#ddd, #ddd) center / 100% 1px no-repeat;
}

.tabs {
    display: flex;
    align-items: center;
    height: 14px;
    gap: 2px;
}

.tabs button {
    display: flex;
    align-items: center;
    gap: 1px;
    height: 14px;
    padding: 0 1px;
}

.tabs button svg {
    width: 9px;
    height: 9px;
}

.tabs .active {
    border: 1px solid #5c7cc0;
    background: #dde3ec;
}

.editor-tabs {
    gap: 1px;
}

.editor-tabs button {
    gap: 0;
    padding: 0;
}

/* editor */
.editor {
    flex: 1;
    display: flex;
    flex-direction: column;
    min-width: 0;
    margin-left: 3px;
    border-left: 1px solid #b0ae9f;
}

.page-tabs {
    display: flex;
    align-items: flex-end;
    height: 16px;
    padding-right: 4px;
}

.page-tabs .x {
    line-height: 16px;
}

.page-tab {
    position: relative;
    width: 62px;
    height: 14px;
    margin-left: 1px;
    font-size: 10px;
    font-weight: bold;
    line-height: 14px;
}

.page-tab svg {
    position: absolute;
    inset: 0;
}

.page-tab span {
    position: relative;
}

.frames {
    flex: 1;
    display: flex;
    gap: 3px;
    margin-right: 4px;
    padding-bottom: 2px;
    border-top: 1px solid #888876;
}

.nav-frame {
    display: flex;
    width: 133px;
    border: 2px solid #1d55b8;
    background: #fff;
}

.nav-page {
    flex: 1;
    min-width: 0;
    background-image: linear-gradient(90deg, #e0f2f8 1px, transparent 1px), linear-gradient(#e0f2f8 1px, transparent 1px);
    background-size: 28px 26px;
    background-position: 15px 0;
}

.banner {
    width: 86px;
    height: 12px;
    margin-bottom: 16px;
    background: linear-gradient(#1a66d8, #2f84f4 40%, #1a66e0 60%, #3c8ff4);
}

.nav-page li {
    position: relative;
    height: 44px;
    padding-left: 9px;
}

.nav-page li svg {
    width: 98px;
    height: 24px;
}

/* label sits on the ruler line */
.nav-page li span {
    position: absolute;
    top: 2px;
    left: 37px;
    font-family: "Liberation Sans", sans-serif;
    font-size: 10px;
    color: #3a3a90;
}

.nav-page li:last-child span {
    left: 40px;
}

.nav-page li:last-child {
    height: 30px;
}

.add-link {
    padding-left: 12px;
    font-size: 10px;
    color: #10307c;
    white-space: nowrap;
}

.add-link a {
    font-style: italic;
    color: #2a58d0;
}

.scrollbar {
    display: flex;
    flex-direction: column;
    justify-content: space-between;
    width: 15px;
    padding: 1px;
    background: #cbdafc;
}

.scrollbar button {
    height: 14px;
    padding: 2px;
    border: 1px solid #b4c8f4;
    border-radius: 2px;
    background: #d5e1fd;
}

.scrollbar svg {
    width: 7px;
    height: 7px;
}

.empty-frame {
    flex: 1;
    display: flex;
    justify-content: center;
    align-items: flex-start;
    gap: 8px;
    padding-top: 130px;
    border: 1px solid #55554c;
    background: #858585;
}

.empty-frame button {
    height: 16px;
    padding: 0 9px;
    background: #ece9d8;
}

.hscroll {
    flex: 1;
    display: flex;
    justify-content: space-between;
    height: 14px;
    margin: 0 17px 0 4px;
    border-left: 1px solid #888;
    background: #f6f5ee;
}

.hscroll button {
    width: 14px;
    justify-content: center;
    border: 1px solid #fff;
    border-right-color: #888;
    border-bottom-color: #888;
    background: #ece9d8;
}

/* status */
footer {
    display: flex;
    align-items: center;
    justify-content: flex-end;
    height: 12px;
    padding-right: 40px;
}

.globe {
    width: 16px;
    height: 10px;
    margin-right: 4px;
}

.glass {
    width: 8px;
    height: 10px;
    margin-right: 2px;
}

.language-bar {
    position: absolute;
    right: 39px;
    bottom: 22px;
    display: flex;
    align-items: center;
    justify-content: flex-end;
    gap: 6px;
    width: 53px;
    height: 19px;
    padding-right: 4px;
    background: #245cdc;
}

.language-bar svg {
    height: 11px;
}

/* frame properties dialog */
.dialog {
    position: absolute;
    top: 124px;
    left: 228px;
    width: 261px;
    border: 3px solid #0a38c8;
    border-top: 0;
    border-radius: 6px 6px 0 0;
    background: #ece9d8;
}

.dialog-title {
    display: flex;
    align-items: center;
    gap: 2px;
    height: 30px;
    margin: 0 -3px;
    padding: 0 3px 0 5px;
    border-radius: 6px 6px 0 0;
    background: linear-gradient(#0a48cc, #2a7cf8 8%, #0458e4 25%, #0560f6 80%, #0346c8);
}

.dialog-title h2 {
    flex: 1;
    font-size: 16px;
    line-height: 28px;
    color: #fff;
}

.dialog-title button {
    width: 23px;
    height: 24px;
    border: 1px solid #fff;
    border-radius: 3px;
    background: linear-gradient(135deg, #6a94f4, #1d4fd0);
}

.dialog-title .close {
    background: linear-gradient(135deg, #f08a68, #d43c14);
}

.dialog-body {
    padding: 5px 5px 4px 3px;
}

.field {
    display: flex;
    align-items: center;
    height: 18px;
    margin-bottom: 4px;
}

.field.second {
    margin-bottom: 0;
}

.field label {
    flex: none;
    width: 52px;
    white-space: nowrap;
}

.field input, .row input[type="text"], .row .combo {
    border: 1px solid #fff;
    border-top-color: #85836f;
    border-left-color: #85836f;
    background: #fff;
}

.field input {
    flex: 1;
    min-width: 0;
    height: 16px;
    padding: 0 1px 2px;
}

.field .btn {
    margin: 0 2px 0 4px;
}

.btn {
    width: 56px;
    height: 18px;
    border: 1px solid #fff;
    border-right-color: #716f5e;
    border-bottom-color: #716f5e;
    background: #ece9d8;
}

.btn.default {
    border: 1px solid #222;
    box-shadow: inset 1px 1px #fff, inset -1px -1px #9d9b8a;
}

.dialog h3 {
    display: flex;
    align-items: center;
    gap: 6px;
    height: 13px;
    font-size: 9px;
}

.dialog h3::after {
    content: "";
    flex: 1;
    height: 2px;
    border-top: 1px solid #c5c2b0;
    background: #fff;
}

.row {
    display: flex;
    align-items: center;
    height: 20px;
    padding-left: 10px;
}

.row label {
    flex: none;
    width: 83px;
}

.row .wide {
    flex: 1;
}

.row input[type="text"] {
    width: 20px;
    height: 15px;
    font-size: 10px;
}

.row input[type="text"]:disabled {
    background: #ece9d8;
    color: #aaa899;
}

.row input[type="checkbox"] {
    appearance: none;
    width: 9px;
    height: 9px;
    margin-right: 5px;
    border: 1px solid #fff;
    border-top-color: #716f5e;
    border-left-color: #716f5e;
    background: #fff;
}

.spin {
    display: flex;
    flex-direction: column;
    width: 15px;
    margin-right: 6px;
}

.spin button {
    height: 8px;
    border: 1px solid #fff;
    border-right-color: #716f5e;
    border-bottom-color: #716f5e;
    font-size: 5px;
    line-height: 5px;
}

.row .unit {
    width: 53px;
    height: 15px;
}

.drop {
    display: flex;
    align-items: center;
    justify-content: center;
    flex: none;
    width: 15px;
    height: 12px;
    border: 1px solid #fff;
    border-right-color: #716f5e;
    border-bottom-color: #716f5e;
    background: #ece9d8;
}

.drop::after {
    content: "";
    border: 3px solid transparent;
    border-top-color: #222;
    border-bottom: 0;
}

.row .off {
    background: #ece9d8;
    color: #aaa899;
}

.off .drop::after {
    border-top-color: #aaa899;
}

.row select {
    padding-left: 1px;
    opacity: 1;
}

.row .frame-page {
    width: 65px;
}

.row .scroll-combo {
    position: relative;
    width: 80px;
    height: 15px;
}

.options {
    position: absolute;
    top: 14px;
    left: -1px;
    z-index: 1;
    width: 81px;
    border: 1px solid #222;
    background: #fff;
    line-height: 9px;
}

.options li {
    padding-left: 1px;
}

.options .selected {
    background: #2a5cc4;
    color: #fff;
}

.actions {
    display: flex;
    gap: 4px;
    margin-top: 3px;
    padding-top: 6px;
    border-top: 1px solid #c5c2b0;
}

.actions .ok {
    margin-left: auto;
}
```
